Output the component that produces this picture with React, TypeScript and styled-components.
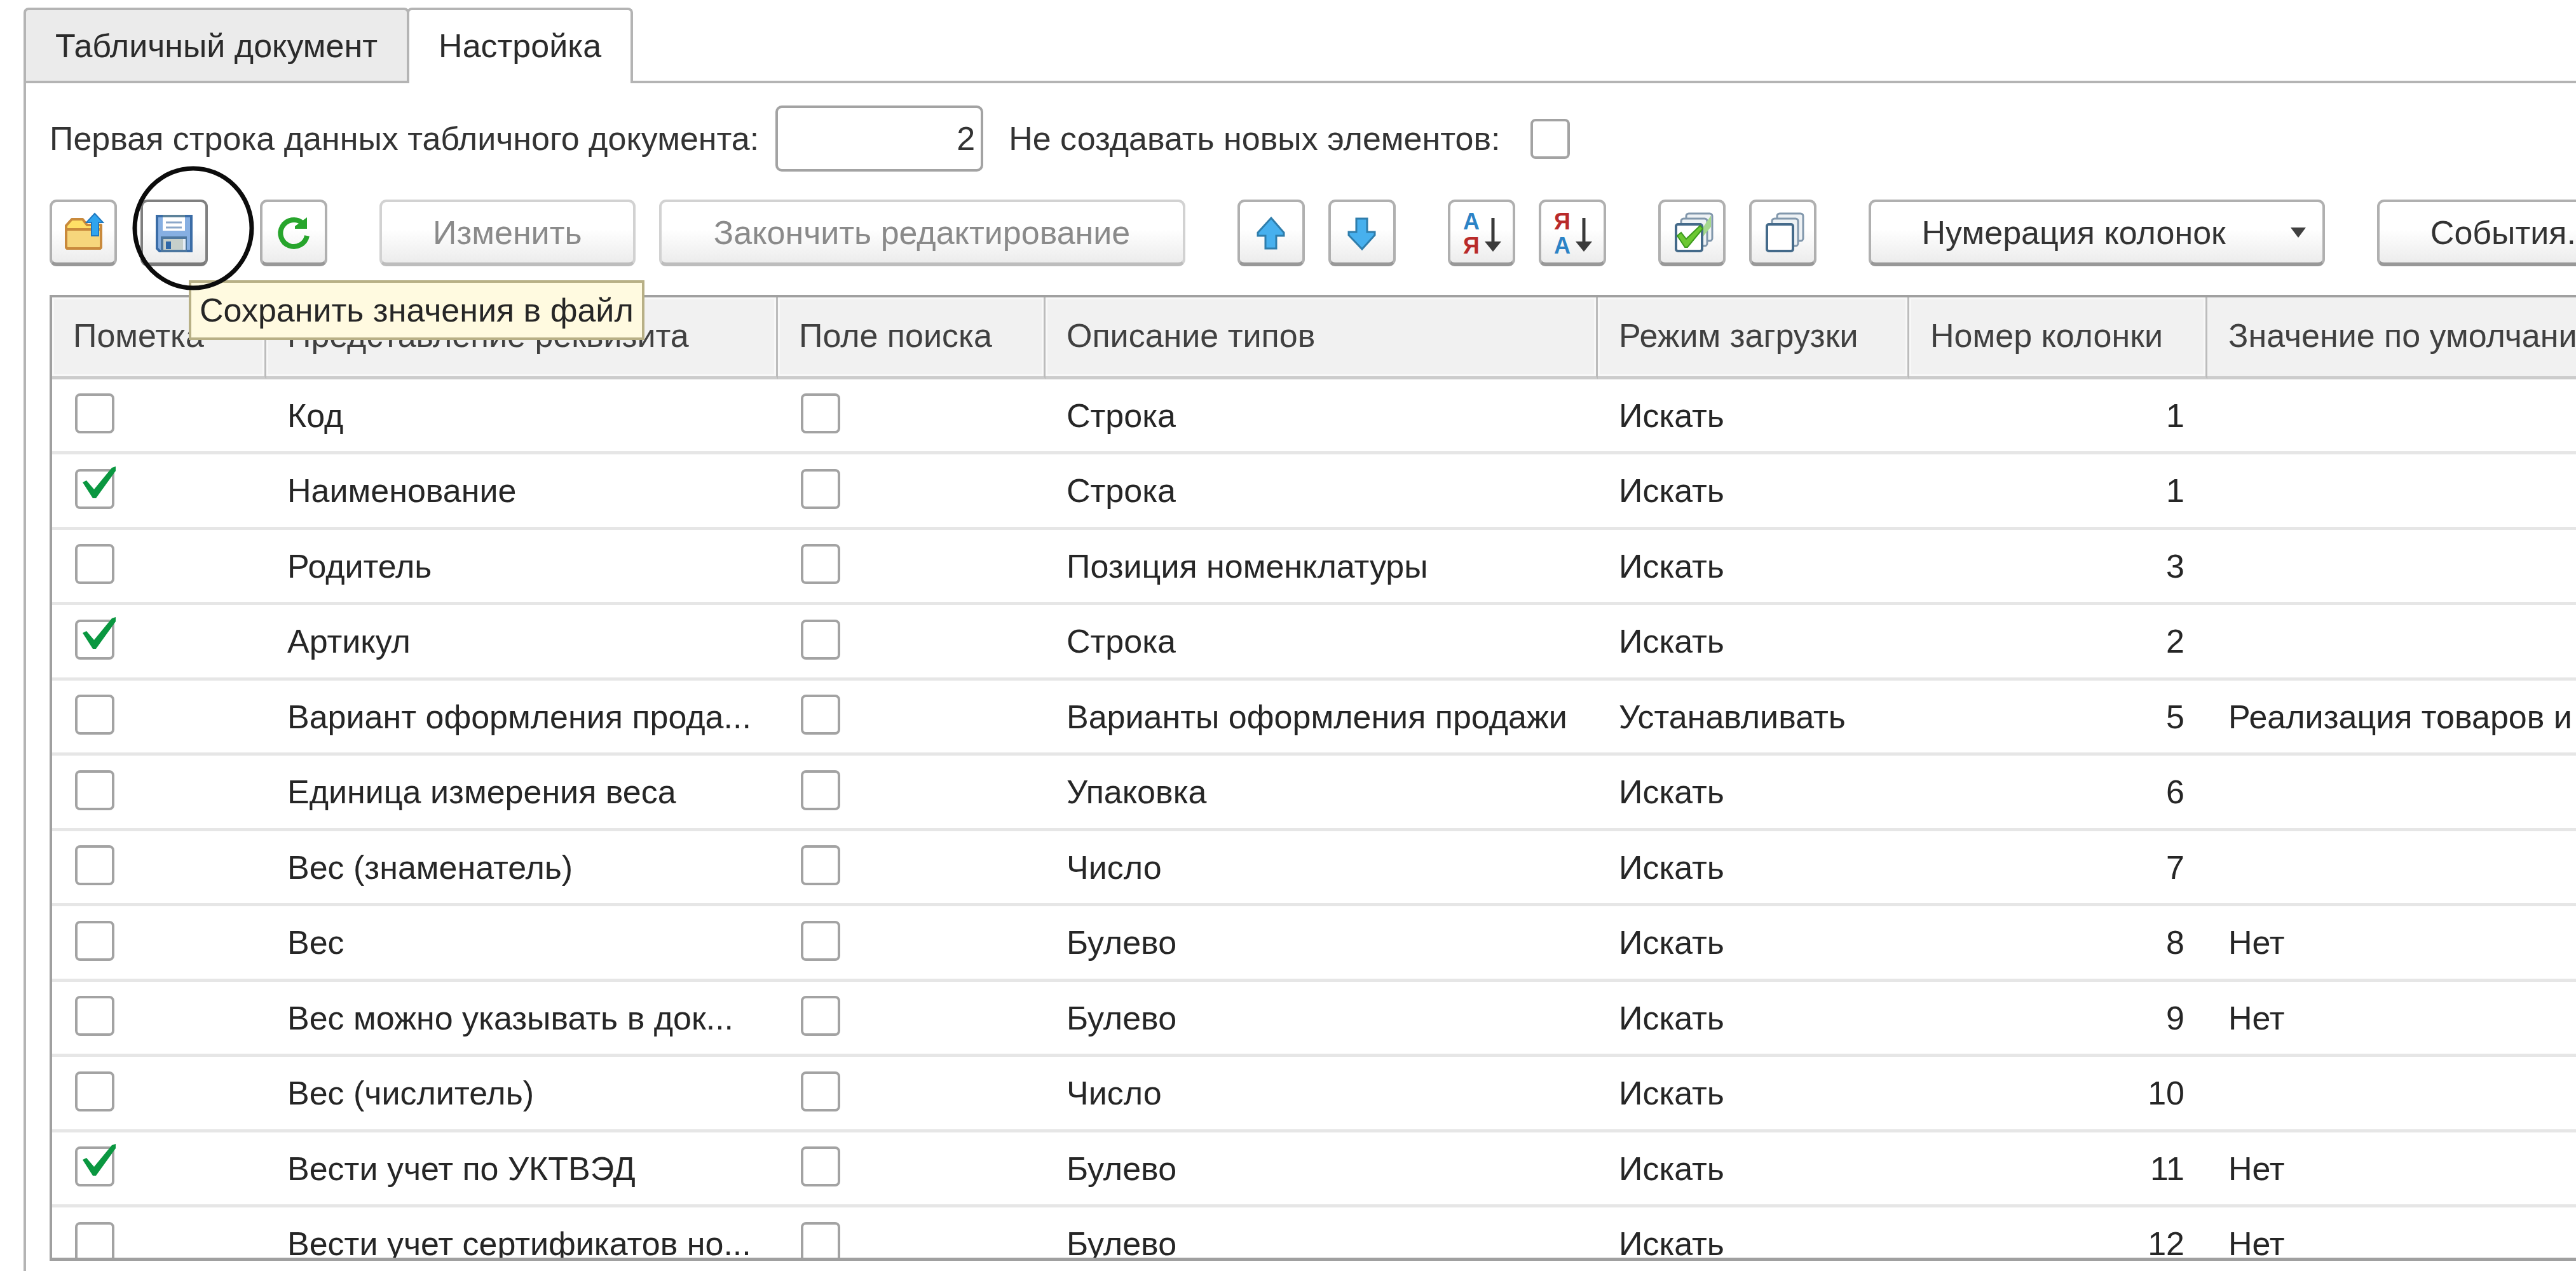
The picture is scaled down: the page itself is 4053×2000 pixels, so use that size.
import React from 'react';
import styled, { createGlobalStyle } from 'styled-components';

const GlobalStyle = createGlobalStyle`
  *, *::before, *::after { box-sizing: border-box; }
  body { margin: 0; background: #fff; }
  body, button, input {
    font-family: "Liberation Sans", Arial, sans-serif;
    font-size: 52px;
    line-height: 60px;
    color: #333;
  }
`;

const Page = styled.main`
  display: flex;
  flex-direction: column;
  height: 100vh;
  padding: 12px 0 0 37px;
  overflow: hidden;
`;

const Tabs = styled.div`
  display: flex;
  flex: none;
`;

const Tab = styled.button<{ $active?: boolean }>`
  height: ${p => (p.$active ? 119 : 115)}px;
  margin: ${p => (p.$active ? '0 0 -4px -4px' : '0')};
  padding: ${p => (p.$active ? '0 46px 4px' : '0 46px')};
  border: 4px solid #b4b4b4;
  border-bottom: 0;
  border-radius: 8px 8px 0 0;
  background: ${p => (p.$active ? '#fff' : '#ebebeb')};
  color: #2b2b2b;
  z-index: ${p => (p.$active ? 1 : 0)};
`;

const Panel = styled.section`
  display: flex;
  flex-direction: column;
  flex: 1;
  min-height: 0;
  padding: 35px 0 16px 37px;
  border: solid #b4b4b4;
  border-width: 4px 0 0 4px;
`;

const Options = styled.div`
  display: flex;
  flex: none;
  align-items: center;
  gap: 40px;
`;

const Field = styled.label<{ $gap: number }>`
  display: flex;
  align-items: center;
  gap: ${p => p.$gap}px;
  white-space: nowrap;
`;

const NumberInput = styled.input`
  width: 327px;
  height: 104px;
  padding: 0 9px;
  border: 4px solid #a3a3a3;
  border-radius: 10px;
  outline: 0;
  text-align: right;
`;

const Toolbar = styled.div`
  display: flex;
  flex: none;
  gap: 82px;
  margin: 44px 0 45px;
`;

const Group = styled.div`
  display: flex;
  flex: none;
  gap: 37px;
`;

const Button = styled.button<{ $hover?: boolean; $minWidth?: number }>`
  display: flex;
  align-items: center;
  justify-content: center;
  flex: none;
  min-width: ${p => p.$minWidth ?? 0}px;
  height: 105px;
  padding: 0 80px;
  border: 4px solid ${p => (p.$hover ? '#808080' : '#b0b0b0')};
  border-bottom: 6px solid ${p => (p.$hover ? '#7a7a7a' : '#989898')};
  border-radius: 11px;
  background: linear-gradient(#fff 45%, #ececec);
  white-space: nowrap;

  &:disabled {
    border-color: #d2d2d2 #d2d2d2 #bdbdbd;
    color: #8a8a8a;
  }
`;

const IconButton = styled(Button)`
  width: 106px;
  padding: 0;
`;

const MenuButton = styled(Button)`
  gap: 102px;
  padding-right: 26px;
`;

const Icon = styled.svg.attrs({ viewBox: '0 0 72 72', 'aria-hidden': true })`
  width: 72px;
  height: 72px;
  overflow: visible;
`;

const Caret = styled.svg`
  width: 24px;
  height: 16px;
`;

const Letter = styled.text`
  font-family: "Liberation Sans", Arial, sans-serif;
  font-size: 36px;
  font-weight: 700;
  line-height: 36px;
`;

const Anchor = styled.div`
  position: relative;
`;

const Tooltip = styled.div`
  position: absolute;
  top: 127px;
  left: 76px;
  z-index: 2;
  padding: 13px;
  border: 4px solid #b8b086;
  background: #fffae0;
  color: #262626;
  white-space: nowrap;
`;

const Ring = styled.svg`
  position: absolute;
  top: -53px;
  left: -13px;
  z-index: 3;
  width: 192px;
  height: 196px;
  pointer-events: none;
`;

const Frame = styled.div`
  flex: 1;
  min-height: 0;
  overflow: hidden;
  border: solid #a0a0a0;
  border-width: 4px 0 5px 4px;
`;

const Table = styled.table`
  width: 100%;
  table-layout: fixed;
  border-collapse: separate;
  border-spacing: 0;
`;

const Col = styled.col<{ $width?: number }>`
  width: ${p => (p.$width ? p.$width + 'px' : 'auto')};
`;

const HeadCell = styled.th`
  height: 129px;
  padding: 0 0 4px 33px;
  border-right: 3px solid #bcbcbc;
  border-bottom: 5px solid #cccccc;
  background: #f1f1f1;
  box-shadow: inset 0 0 0 3px #f8f8f8;
  color: #404040;
  font-weight: 400;
  text-align: left;
  white-space: nowrap;

  &:last-child { border-right: 0; box-shadow: none; }
`;

const Row = styled.tr`
  height: 118px;
  &:nth-child(even) { height: 119px; }
`;

const Cell = styled.td<{ $number?: boolean }>`
  padding: 0 36px 0 33px;
  border-bottom: 5px solid #e6e6e6;
  color: #262626;
  text-align: ${p => (p.$number ? 'right' : 'left')};
  white-space: nowrap;
`;

const CheckCell = styled(Cell)`
  padding: 0 0 6px 36px;
`;

const CheckWrap = styled.span`
  position: relative;
  display: block;
  flex: none;
  width: 62px;
  height: 63px;
`;

const CheckInput = styled.input`
  display: block;
  width: 62px;
  height: 63px;
  margin: 0;
  appearance: none;
  border: 4px solid #a3a3a3;
  border-radius: 8px;
  background: #fff;

  & + svg { display: none; }
  &:checked + svg { display: block; }
`;

const Tick = styled.svg`
  position: absolute;
  top: 0;
  left: 0;
  width: 62px;
  height: 63px;
  overflow: visible;
  pointer-events: none;
`;

function Check(props: React.InputHTMLAttributes<HTMLInputElement>) {
  return (
    <CheckWrap>
      <CheckInput type="checkbox" {...props} />
      <Tick viewBox="0 0 62 63" aria-hidden="true">
        <path d="M12 21L18 18L30 32L58 -2L64 -4L64 3L33 46L28 46Z" fill="#0a9740" />
      </Tick>
    </CheckWrap>
  );
}

function FolderIcon() {
  return (
    <Icon>
      <path d="M9 30V25L18 15H35L42 24H64V58Q64 61 61 61H12Q9 61 9 58Z" fill="#ffe066" stroke="#c98a3c" strokeWidth="4" strokeLinejoin="round" />
      <path d="M9 31H64V58Q64 61 61 61H12Q9 61 9 58Z" fill="#f6d67c" stroke="#c98a3c" strokeWidth="4" strokeLinejoin="round" />
      <path d="M54 6L67 20H60V41H49V20H41Z" fill="#2fa4ee" stroke="#2079c0" strokeWidth="2" />
    </Icon>
  );
}

function SaveIcon() {
  return (
    <Icon>
      <path d="M9 10H63V65H13L9 61Z" fill="#86afe2" stroke="#3a6ca6" strokeWidth="4" />
      <rect x="18" y="10" width="35" height="23" fill="#fff" />
      <path d="M18 10H53" stroke="#5c829a" strokeWidth="4" />
      <path d="M23 20H48M23 28H48" stroke="#8ba7c9" strokeWidth="3" />
      <rect x="17" y="44" width="37" height="21" fill="#c6cfca" stroke="#4d779f" strokeWidth="4" />
      <path d="M52 46V63" stroke="#e4ecf4" strokeWidth="4" />
      <rect x="23" y="50" width="8" height="12" fill="#2f68a8" />
    </Icon>
  );
}

function RefreshIcon() {
  return (
    <Icon>
      <path d="M57 41A21 21 0 1 1 50 21" fill="none" stroke="#27a52c" strokeWidth="8" strokeLinecap="butt" />
      <path d="M57 12V30H38V26Z" fill="#27a52c" />
    </Icon>
  );
}

function MoveIcon({ down }: { down?: boolean }) {
  return (
    <Icon>
      <path
        d={down ? 'M27 14H44V35H56V40L36 62L15 40V35H27Z' : 'M36 13L56 36V41H44V61H27V41H15V36Z'}
        fill="#47b0ee"
        stroke="#2f7dab"
        strokeWidth="3"
      />
    </Icon>
  );
}

function SortIcon({ reverse }: { reverse?: boolean }) {
  return (
    <Icon>
      <Letter x="7" y="31" fill={reverse ? '#b92a2a' : '#2c83c6'}>{reverse ? 'Я' : 'А'}</Letter>
      <Letter x="7" y="69" fill={reverse ? '#2c83c6' : '#b92a2a'}>{reverse ? 'А' : 'Я'}</Letter>
      <path d="M54 13V54" stroke="#3a3a3a" strokeWidth="5" />
      <path d="M41 50H67L54 66Z" fill="#3a3a3a" />
    </Icon>
  );
}

function StackIcon({ checked }: { checked?: boolean }) {
  return (
    <Icon>
      <g fill="#eef2f5" stroke="#8197ac" strokeWidth="3">
        <rect x="27" y="6" width="41" height="43" rx="4" />
        <rect x="19" y="14" width="41" height="43" rx="4" />
      </g>
      {checked && <path d="M52 30L66 9V27L52 44Z" fill="#a5d88d" />}
      <rect x="11" y="23" width="41" height="42" rx="3" fill="#fff" stroke="#446a8a" strokeWidth="4" />
      {checked && <path d="M13 41L19 36L27 46L49 25L53 30L29 59H25Z" fill="#6cc832" stroke="#3c9a1c" strokeWidth="2" />}
    </Icon>
  );
}

const columns: { title: string; width?: number }[] = [
  { title: 'Пометка', width: 337 },
  { title: 'Представление реквизита', width: 805 },
  { title: 'Поле поиска', width: 421 },
  { title: 'Описание типов', width: 869 },
  { title: 'Режим загрузки', width: 490 },
  { title: 'Номер колонки', width: 469 },
  { title: 'Значение по умолчанию' },
];

type Item = [marked: boolean, name: string, type: string, mode: string, column: number, value: string];

const items: Item[] = [
  [false, 'Код', 'Строка', 'Искать', 1, ''],
  [true, 'Наименование', 'Строка', 'Искать', 1, ''],
  [false, 'Родитель', 'Позиция номенклатуры', 'Искать', 3, ''],
  [true, 'Артикул', 'Строка', 'Искать', 2, ''],
  [false, 'Вариант оформления прода...', 'Варианты оформления продажи', 'Устанавливать', 5, 'Реализация товаров и'],
  [false, 'Единица измерения веса', 'Упаковка', 'Искать', 6, ''],
  [false, 'Вес (знаменатель)', 'Число', 'Искать', 7, ''],
  [false, 'Вес', 'Булево', 'Искать', 8, 'Нет'],
  [false, 'Вес можно указывать в док...', 'Булево', 'Искать', 9, 'Нет'],
  [false, 'Вес (числитель)', 'Число', 'Искать', 10, ''],
  [true, 'Вести учет по УКТВЭД', 'Булево', 'Искать', 11, 'Нет'],
  [false, 'Вести учет сертификатов но...', 'Булево', 'Искать', 12, 'Нет'],
];

export default function App() {
  return (
    <Page>
      <GlobalStyle />
      <Tabs role="tablist">
        <Tab role="tab" aria-selected="false">Табличный документ</Tab>
        <Tab role="tab" aria-selected="true" $active>Настройка</Tab>
      </Tabs>
      <Panel role="tabpanel">
        <Options>
          <Field $gap={26}>
            Первая строка данных табличного документа:
            <NumberInput type="text" inputMode="numeric" defaultValue="2" />
          </Field>
          <Field $gap={48}>
            Не создавать новых элементов:
            <Check />
          </Field>
        </Options>

        <Toolbar role="toolbar">
          <Group>
            <IconButton aria-label="Загрузить значения из файла"><FolderIcon /></IconButton>
            <Anchor>
              <IconButton $hover aria-label="Сохранить значения в файл"><SaveIcon /></IconButton>
              <Tooltip role="tooltip">Сохранить значения в файл</Tooltip>
              <Ring viewBox="0 0 192 196" aria-hidden="true">
                <ellipse cx="96" cy="98" rx="92" ry="94" fill="none" stroke="#0c0c0c" strokeWidth="7" />
              </Ring>
            </Anchor>
          </Group>
          <IconButton aria-label="Обновить"><RefreshIcon /></IconButton>
          <Group>
            <Button disabled>Изменить</Button>
            <Button disabled $minWidth={828}>Закончить редактирование</Button>
          </Group>
          <Group>
            <IconButton aria-label="Переместить вверх"><MoveIcon /></IconButton>
            <IconButton aria-label="Переместить вниз"><MoveIcon down /></IconButton>
          </Group>
          <Group>
            <IconButton aria-label="Сортировать по возрастанию"><SortIcon /></IconButton>
            <IconButton aria-label="Сортировать по убыванию"><SortIcon reverse /></IconButton>
          </Group>
          <Group>
            <IconButton aria-label="Установить флажки"><StackIcon checked /></IconButton>
            <IconButton aria-label="Снять флажки"><StackIcon /></IconButton>
          </Group>
          <MenuButton aria-haspopup="menu">
            Нумерация колонок
            <Caret viewBox="0 0 24 16" aria-hidden="true"><path d="M0 0H24L12 16Z" fill="#404040" /></Caret>
          </MenuButton>
          <Button>События.</Button>
        </Toolbar>

        <Frame>
          <Table>
            <colgroup>
              {columns.map(c => <Col key={c.title} $width={c.width} />)}
            </colgroup>
            <thead>
              <tr>
                {columns.map(c => <HeadCell key={c.title} scope="col">{c.title}</HeadCell>)}
              </tr>
            </thead>
            <tbody>
              {items.map(([marked, name, type, mode, column, value]) => (
                <Row key={name}>
                  <CheckCell><Check defaultChecked={marked} aria-label={'Пометка: ' + name} /></CheckCell>
                  <Cell>{name}</Cell>
                  <CheckCell><Check aria-label={'Поле поиска: ' + name} /></CheckCell>
                  <Cell>{type}</Cell>
                  <Cell>{mode}</Cell>
                  <Cell $number>{column}</Cell>
                  <Cell>{value}</Cell>
                </Row>
              ))}
            </tbody>
          </Table>
        </Frame>
      </Panel>
    </Page>
  );
}
